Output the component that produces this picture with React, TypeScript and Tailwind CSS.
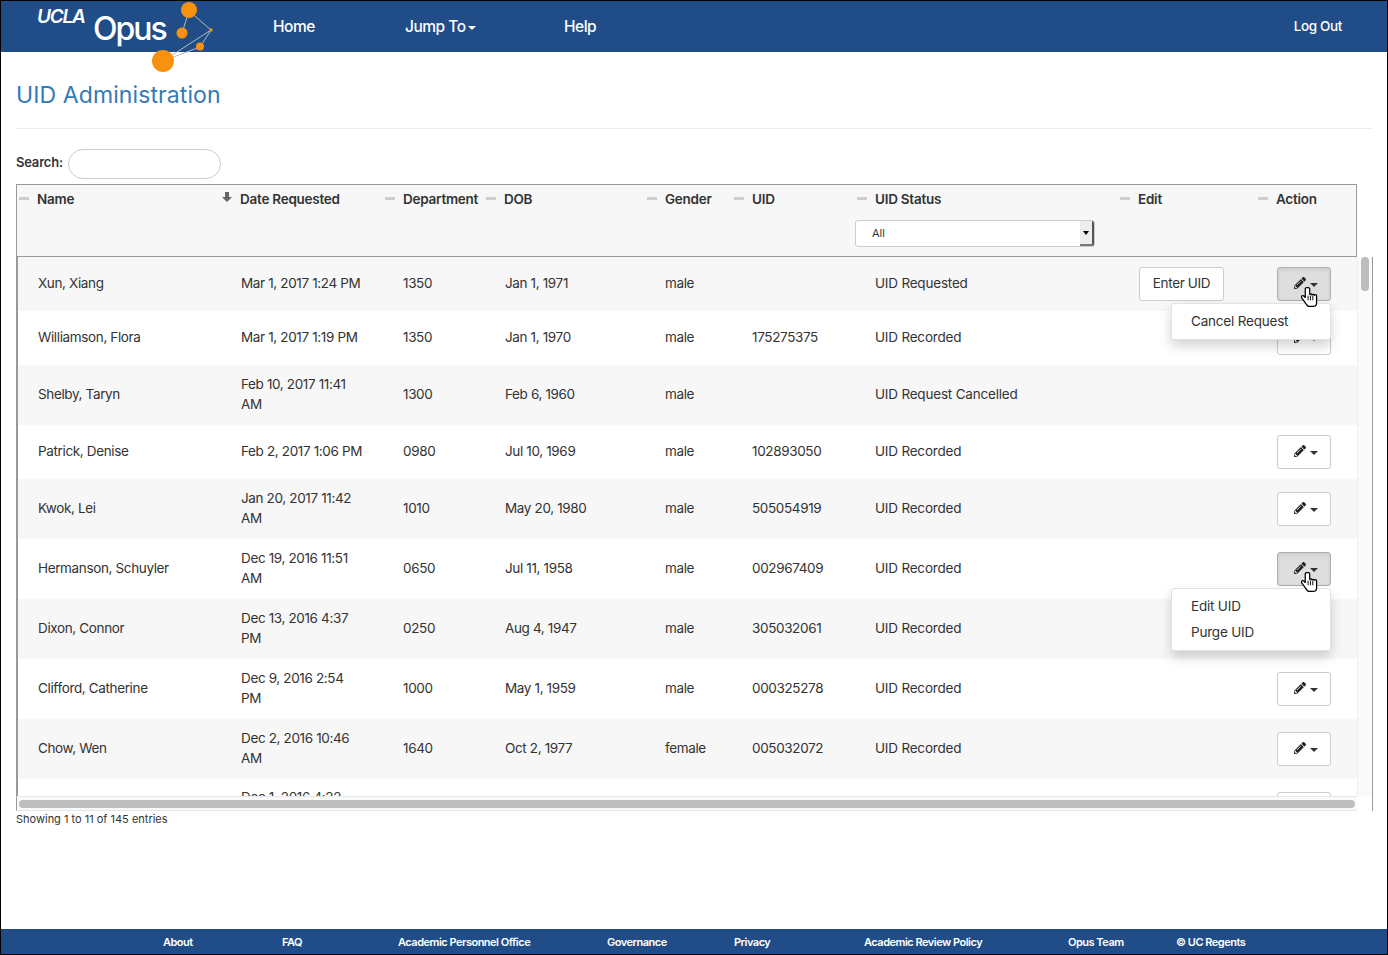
import { FaPencilAlt } from "react-icons/fa"

const gridCols = "grid grid-cols-[203px_163px_101px_161px_87px_123px_263px_138px_1fr] items-center"

const columns = ["Name", "Date Requested", "Department", "DOB", "Gender", "UID", "UID Status", "Edit", "Action"]

const footerLinks = ["About", "FAQ", "Academic Personnel Office", "Governance", "Privacy", "Academic Review Policy", "Opus Team", "© UC Regents"]

type Row = {
    name: string
    date: string
    dept: string
    dob: string
    gender: string
    uid: string
    status: string
    height: string
    shaded: boolean
    action: boolean
    open?: string[]
    enter?: boolean
}

const rows: Row[] = [
    { name: "Xun, Xiang", date: "Mar 1, 2017 1:24 PM", dept: "1350", dob: "Jan 1, 1971", gender: "male", uid: "", status: "UID Requested", height: "h-[54px]", shaded: true, action: true, open: ["Cancel Request"], enter: true },
    { name: "Williamson, Flora", date: "Mar 1, 2017 1:19 PM", dept: "1350", dob: "Jan 1, 1970", gender: "male", uid: "175275375", status: "UID Recorded", height: "h-[54px]", shaded: false, action: true },
    { name: "Shelby, Taryn", date: "Feb 10, 2017 11:41\nAM", dept: "1300", dob: "Feb 6, 1960", gender: "male", uid: "", status: "UID Request Cancelled", height: "h-[60px]", shaded: true, action: false },
    { name: "Patrick, Denise", date: "Feb 2, 2017 1:06 PM", dept: "0980", dob: "Jul 10, 1969", gender: "male", uid: "102893050", status: "UID Recorded", height: "h-[54px]", shaded: false, action: true },
    { name: "Kwok, Lei", date: "Jan 20, 2017 11:42\nAM", dept: "1010", dob: "May 20, 1980", gender: "male", uid: "505054919", status: "UID Recorded", height: "h-[60px]", shaded: true, action: true },
    { name: "Hermanson, Schuyler", date: "Dec 19, 2016 11:51\nAM", dept: "0650", dob: "Jul 11, 1958", gender: "male", uid: "002967409", status: "UID Recorded", height: "h-[60px]", shaded: false, action: true, open: ["Edit UID", "Purge UID"] },
    { name: "Dixon, Connor", date: "Dec 13, 2016 4:37\nPM", dept: "0250", dob: "Aug 4, 1947", gender: "male", uid: "305032061", status: "UID Recorded", height: "h-[60px]", shaded: true, action: true },
    { name: "Clifford, Catherine", date: "Dec 9, 2016 2:54\nPM", dept: "1000", dob: "May 1, 1959", gender: "male", uid: "000325278", status: "UID Recorded", height: "h-[60px]", shaded: false, action: true },
    { name: "Chow, Wen", date: "Dec 2, 2016 10:46\nAM", dept: "1640", dob: "Oct 2, 1977", gender: "female", uid: "005032072", status: "UID Recorded", height: "h-[60px]", shaded: true, action: true },
]

function HandCursor () {
    return (
        <svg viewBox="0 0 18 23" className="absolute left-[24px] top-[19px] z-20 w-[17px] h-[22px]" fill="#fff" stroke="#000" strokeWidth="1.3" strokeLinejoin="round">
            <path d="M6 1.5c-.8 0-1.5.7-1.5 1.5v9L3 10.5c-.7-.7-1.7-.7-2.3 0-.5.6-.4 1.4.1 2l4 5.5c.8 1.1 1.8 3 3.2 3.5h5c2.3 0 3.500-1.800 3.500-4v-7c0-.8-.7-1.400-1.400-1.400-.5 0-.9.2-1.100.6-.2-.6-.7-1-1.300-1-.5 0-.9.2-1.200.6-.2-.6-.7-1-1.300-1-.4 0-.7.1-1 .4V3c0-.8-.7-1.500-1.500-1.500z" />
            <path d="M7.500 10v5M10 10v5M12.500 10v5" fill="none" strokeWidth="1" />
        </svg>
    )
}

function ActionButton ({ menu }: { menu?: string[] }) {
    return (
        <div className="relative w-[54px] h-[34px]">
            <button className={`w-[54px] h-[34px] pl-[4px] rounded-[3px] border flex items-center justify-center gap-[4px] ${menu ? "bg-[#dedede] border-[#adadad] shadow-[inset_0_2px_4px_rgba(0,0,0,0.08)]" : "bg-white border-[#ccc]"}`}>
                <FaPencilAlt className="w-[12px] h-[12px] mb-[2px] text-[#222]" />
                <span className="w-0 h-0 mt-[1px] border-x-[4px] border-x-transparent border-t-[4px] border-t-[#333]" />
            </button>
            {menu && <HandCursor />}
            {menu && (
                <ul className="absolute right-0 top-[36px] z-10 w-[160px] pt-[4px] pb-[5px] bg-white border border-[#e2e2e2] rounded-[3px] shadow-[0_6px_12px_rgba(0,0,0,0.175)]">
                    {menu.map((item) => (
                        <li key={item} className="min-h-[26px] leading-[26px] pl-[19px] text-[#333] tracking-[-0.2px]">{item}</li>
                    ))}
                </ul>
            )}
        </div>
    )
}

function Logo () {
    return (
        <div className="relative w-[272px] self-stretch shrink-0">
            <span className="absolute left-[36px] top-[2px] text-[19px] font-semibold italic text-white tracking-[-1.2px]">UCLA</span>
            <span className="absolute left-[92px] top-[8px] text-[32px] leading-[40px] font-medium text-white tracking-[-2px]">Opus</span>
            <svg viewBox="0 0 230 75" className="absolute left-0 top-[-1px] w-[230px] h-[75px]" fill="#f7910f">
                <g stroke="#b8b8b8" strokeWidth="1" fill="none">
                    <path d="M188 11L210 30L199 47L162 61L210 30M188 11L181 33" />
                </g>
                <circle cx="188" cy="10" r="8" />
                <circle cx="181" cy="33" r="5.500" />
                <circle cx="210" cy="30" r="1.700" />
                <circle cx="199" cy="46.500" r="4" />
                <circle cx="162" cy="61" r="11" />
            </svg>
        </div>
    )
}

export default function App () {
    return (
        <div className="h-[955px] flex flex-col border border-black bg-white text-[13.5px] text-[#333] font-[family-name:Inter,sans-serif] tracking-[-0.36px] overflow-hidden">
            <header className="h-[51px] shrink-0 bg-[#204d87] text-white flex items-center">
                <Logo />
                <nav className="grid grid-cols-[132px_159px_1fr] flex-1 items-center text-[15.5px] font-medium tracking-[-0.5px]">
                    <a>Home</a>
                    <a className="flex items-center gap-[2px]">Jump To<span className="w-0 h-0 border-x-[4px] border-x-transparent border-t-[4px] border-t-white mt-[2px]" /></a>
                    <a>Help</a>
                </nav>
                <a className="mr-[45px] text-[13.5px] font-medium">Log Out</a>
            </header>

            <main className="px-[15px] flex-1">
                <h1 className="mt-[28px] text-[23px] leading-[30px] text-[#337ab7] tracking-[0.1px]">UID Administration</h1>
                <hr className="mt-[18px] mb-[20px] mr-0 border-[#eeeeee]" />
                <div className="flex items-center gap-[5px] h-[30px]">
                    <label className="text-[13px] font-semibold pb-[2px] tracking-[-0.2px]">Search:</label>
                    <input type="text" className="w-[153px] h-[30px] rounded-[15px] border border-[#ccc] outline-none" />
                </div>

                <div className="mt-[5px] w-[1341px] h-[73px] pt-[4px] pl-[2px] bg-[#f7f7f7] border border-[#999]">
                    <div className={`${gridCols} h-[16px]`}>
                        {columns.map((col, i) => (
                            <div key={col} className="flex items-center gap-[8px] font-semibold text-[13.5px] tracking-[-0.25px] whitespace-nowrap">
                                {col === "Date Requested" ? (
                                    <svg viewBox="0 0 10 10" className="w-[10px] h-[10px] mb-[4px]" fill="#666"><path d="M3 0h4v5h3L5 10 0 5h3z" /></svg>
                                ) : (
                                    <span className={`w-[10px] h-[3px] bg-[#cfcfcf] ${i === 0 ? "mb-[2px]" : "mb-[1px]"}`} />
                                )}
                                {col}
                            </div>
                        ))}
                    </div>
                    <div className={`${gridCols} mt-[15px]`}>
                        <div className="col-start-7 -ml-[2px] w-[240px] h-[27px] flex items-center justify-between pl-[16px] bg-white border border-[#ccc] rounded-[3px] text-[11px] tracking-normal">
                            All
                            <span className="w-[14px] h-[25px] flex items-center justify-center bg-[#eee] border-r-2 border-b-2 border-r-[#555] border-b-[#777] rounded-r-[2px]">
                                <span className="w-0 h-0 border-x-[3px] border-x-transparent border-t-[4px] border-t-black" />
                            </span>
                        </div>
                    </div>
                </div>

                <div className="flex w-[1357px] h-[539px] border-l-2 border-r border-l-[#999] border-r-[#999]">
                    <div className="w-[1339px] overflow-hidden">
                        {rows.map((r) => (
                            <div key={r.name} className={`${gridCols} ${r.height} pl-[20px] ${r.shaded ? "bg-[#f7f7f7]" : "bg-white"}`}>
                                <div className="pb-[2px]">{r.name}</div>
                                <div className="pb-[2px] whitespace-pre-line leading-[20px]">{r.date}</div>
                                <div className="pb-[2px] -ml-[1px]">{r.dept}</div>
                                <div className="pb-[2px]">{r.dob}</div>
                                <div className="pb-[2px] -ml-[1px]">{r.gender}</div>
                                <div className="pb-[2px] -ml-[1px]">{r.uid}</div>
                                <div className="pb-[2px] -ml-[1px] tracking-[-0.2px]">{r.status}</div>
                                <div>
                                    {r.enter && <button className="w-[85px] h-[34px] pb-[2px] bg-white border border-[#ccc] rounded-[3px]">Enter UID</button>}
                                </div>
                                <div>{r.action && <ActionButton menu={r.open} />}</div>
                            </div>
                        ))}
                        <div className={`${gridCols} items-start h-[60px] pl-[20px] pt-[8px] bg-white`}>
                            <div className="col-start-2 whitespace-pre-line leading-[20px]">{"Dec 1, 2016 4:22\nPM"}</div>
                            <div className="col-start-9 mt-[5px] w-[54px] h-[34px] bg-white border border-[#ccc] rounded-[3px]" />
                        </div>
                    </div>
                    <div className="w-[15px] bg-[#fafafa] border-l border-[#eee] pl-[3px]">
                        <div className="w-[8px] h-[34px] rounded-[4px] bg-[#bdbdbd]" />
                    </div>
                </div>
                <div className="w-[1357px] h-[15px] flex">
                    <div className="w-[1341px] h-[15px] pt-[3px] pl-[2px] pr-[2px] bg-[#fafafa] border-y border-l border-[#e6e6e6] border-l-[#999]">
                        <div className="h-[8px] rounded-[4px] bg-[#bdbdbd]" />
                    </div>
                    <div className="flex-1 border-r border-[#999]" />
                </div>
                <p className="text-[11px] leading-[16px] tracking-normal">Showing 1 to 11 of 145 entries</p>
            </main>

            <footer className="h-[25px] pt-[1px] shrink-0 bg-[#204d87] text-white text-[11px] font-semibold tracking-[-0.5px] pl-[162px] grid grid-cols-[119px_116px_209px_127px_130px_204px_108px_1fr] items-center">
                {footerLinks.map((link) => (
                    <a key={link} className="whitespace-nowrap">{link}</a>
                ))}
            </footer>
        </div>
    )
}
